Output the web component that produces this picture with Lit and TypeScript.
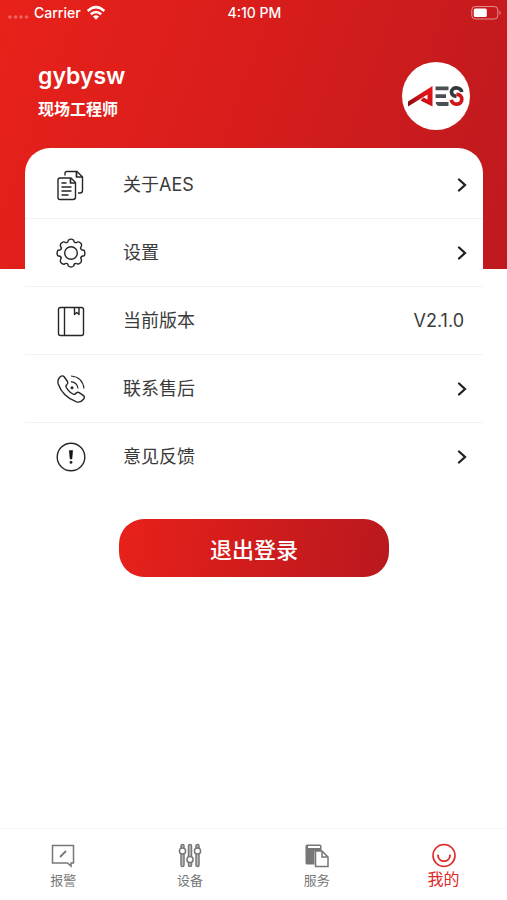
import { LitElement, html, css, svg, TemplateResult } from "lit";
import { customElement } from "lit/decorators.js";
import { classMap } from "lit/directives/class-map.js";

interface MenuRow {
  icon: TemplateResult;
  label: string;
  value?: string;
}

interface Tab {
  icon: TemplateResult;
  label: string;
  active?: boolean;
}

const documents = svg`
  <path d="M9 6.500V4.500Q9 2.500 11 2.500H21L26.500 8V21.500Q26.500 24 24 24H22"/>
  <path d="M20.500 2.500V8H26.500" stroke-width="1.700"/>
  <path d="M4 9H15L19.500 13.500V28Q19.500 30.500 17 30.500H4Q2 30.500 2 28.500V11Q2 9 4 9Z"/>
  <path d="M14.500 9V14H19.500" stroke-width="1.700"/>
  <path d="M5.500 14H10.500M5.500 18H15.500M5.500 22H15.500M5.500 26H12.500"/>`;

const gear = svg`
  <path d="M12.300 3.200Q15 1 17.700 3.200Q18 6 20.400 5.600Q22.600 3.700 25.300 6.700Q26.200 9.200 24.500 10.800Q25 13.400 28 13.200Q29.600 16 28.300 18.700Q25 18.800 24.700 21.200Q26.200 23.400 24.800 25.500Q22.600 28 20.300 26.500Q18 26 17.700 29Q15 31 12.300 29Q12 26 9.700 26.400Q7.400 28.300 4.800 25.500Q3.700 23.400 5.300 21.200Q5 18.800 1.700 18.700Q.300 16 2 13.200Q5 13.400 5.500 10.800Q3.700 9.200 4.700 6.700Q7.400 3.700 9.600 5.600Q12 6 12.300 3.200Z"/>
  <circle cx="15" cy="16" r="6.300"/>`;

const book = svg`
  <rect x="2.500" y="2.500" width="25" height="28" rx="2"/>
  <path d="M8.500 2.500V30.500M18.500 2.500V9.500L20.700 7.500L23 9.500V2.500"/>`;

const phone = svg`
  <path d="M2 8Q2 6 4 4Q6.500 1.800 8.300 4L11.500 8.500Q12.500 10.300 11 11.500Q9.300 12.700 10.300 14.500Q13.300 19.600 17.700 21.300Q19 21.800 20.200 20Q21.500 18.600 23.200 19.600L27.500 22.600Q29.300 24 27.500 26.200Q24.500 30 20.500 28.800Q6.800 24 2.200 11Q1.800 9.500 2 8Z"/>
  <path d="M15 8.700Q21.300 9.500 22 15.500M15 3Q26.500 4 28 15.500" stroke-width="1.200"/>
  <circle cx="16" cy="14.700" r=".8"/>`;

const notice = svg`
  <circle cx="15" cy="16" r="13.800"/>
  <path d="M13.300 9.500H16.700L15.900 18H14.100Z" fill="currentColor" stroke-width=".6"/>
  <circle cx="15" cy="21.300" r="1.100" fill="currentColor" stroke-width=".8"/>`;

const alarm = svg`
  <path d="M1.500 2.500H22.500V20H20V23L16.500 20H1.500Z"/>
  <path d="M9 14L15 8" stroke-width="1.800"/>`;

const sliders = svg`
  <path d="M4.500 3V22M12 3V22M19.500 3V22" stroke-width="4.500" stroke-linecap="round"/>
  <path d="M4.500 3V22M12 3V22M19.500 3V22" stroke="#bbb" stroke-width="1.600" stroke-linecap="round"/>
  <g fill="#fff"><circle cx="4.500" cy="8" r="3.100"/><circle cx="12" cy="16.500" r="3.100"/><circle cx="19.500" cy="8" r="3.100"/></g>`;

const service = svg`
  <path d="M2 1.500H15Q16.500 1.500 16.500 3V8H9.500V21.500H2Q.500 21.500 .500 20V3Q.500 1.500 2 1.500Z" fill="currentColor" stroke="none"/>
  <path d="M3 4H15" stroke="#fff" stroke-width="2"/>
  <path d="M10.500 8H17L23 14V23.500H10.500Z" fill="#fff"/>
  <path d="M17 8V14H23"/>`;

const smile = svg`
  <circle cx="12" cy="12.500" r="11" stroke-width="1.600"/>
  <path d="M6 12.500C6.500 20 17.500 20 18 12.500" stroke-width="1.900" stroke-linecap="round"/>`;

@customElement("status-bar")
class StatusBar extends LitElement {
  static styles = css`
    :host {
      display: grid;
      grid-template-columns: 1fr auto 1fr;
      align-items: center;
      height: 26px;
      padding: 0 6px 0 8px;
      font: 500 14px/20px Inter, "Liberation Sans", sans-serif;
    }
    .carrier {
      display: flex;
      align-items: center;
      gap: 5px;
    }
    .battery {
      justify-self: end;
    }
    svg {
      display: block;
    }
  `;

  render() {
    return html`
      <div class="carrier">
        <svg width="21" height="16" fill="#fff" fill-opacity=".3" aria-hidden="true">
          <circle cx="2" cy="12" r="1.800" /><circle cx="7.500" cy="12" r="1.800" />
          <circle cx="13" cy="12" r="1.800" /><circle cx="18.500" cy="12" r="1.800" />
        </svg>
        <span>Carrier</span>
        <svg width="20" height="16" viewBox="0 0 20 16" fill="none" stroke="#fff" stroke-width="2.500" aria-hidden="true">
          <path d="M1.700 6Q10-1.700 18.300 6M4.800 9.300Q10 4.600 15.200 9.300" />
          <path d="M7 11.600Q10 9 13 11.600L10 14.800Z" fill="#fff" stroke="none" />
        </svg>
      </div>
      <span>4:10 PM</span>
      <svg class="battery" width="30" height="16" viewBox="0 0 30 16" aria-hidden="true">
        <rect x=".8" y="1.500" width="26" height="12.500" rx="3.500" fill="none" stroke="#fff" stroke-opacity=".5" />
        <rect x="2.800" y="3.500" width="13" height="8.500" rx="1.500" fill="#fff" />
        <path d="M28.500 5.500Q31 7.700 28.500 10Z" fill="#fff" fill-opacity=".5" />
      </svg>
    `;
  }
}

@customElement("brand-avatar")
class BrandAvatar extends LitElement {
  static styles = css`
    :host {
      display: grid;
      place-items: center;
      width: 68px;
      height: 68px;
      border-radius: 50%;
      background: #fff;
    }
  `;

  render() {
    return html`
      <svg width="56" height="22" viewBox="0 0 56 22" role="img" aria-label="AES">
        <defs>
          <linearGradient id="wing" x1="0" y1="1" x2="1" y2="0">
            <stop offset="0" stop-color="#7e0d12" />
            <stop offset=".6" stop-color="#dc1218" />
            <stop offset="1" stop-color="#e7141a" />
          </linearGradient>
        </defs>
        <path d="M0 16.500L24.500 1V21.500L12.500 15.500L15.500 12.500L19.500 14.500V9.500L0 21.500Z" fill="url(#wing)" />
        <path d="M27.500 1.500H40.500V5.300H27.500ZM27.500 9.300H38V13H27.500ZM27.500 17H40.500V21H31Q28.500 21 27.500 17Z" fill="#4a4f53" />
        <g fill="none" stroke-width="3.700">
          <path d="M53.800 7C53 1.800 43.500 1.300 43.500 7C43.500 9.500 45.500 11 48.500 11.300" stroke="#34393d" />
          <path d="M48.500 9.300C52 9.300 53.800 11.500 53.800 14.300C53.800 20.500 44.500 20.800 43.300 14.800" stroke="#cf141b" />
        </g>
      </svg>
    `;
  }
}

@customElement("profile-menu")
class ProfileMenu extends LitElement {
  static styles = css`
    :host {
      display: block;
      padding-top: 3px;
      border-radius: 25px 25px 0 0;
      background: #fff;
    }
    .row {
      box-sizing: border-box;
      display: grid;
      grid-template-columns: 32px 1fr auto;
      align-items: center;
      column-gap: 35px;
      width: 100%;
      height: 68px;
      padding: 0 15px 0 31px;
      border: 0;
      border-bottom: 1px solid #f2f2f2;
      background: none;
      color: #3a3a3a;
      text-align: left;
      font: 400 18px/26px Inter, "Noto Sans CJK SC", sans-serif;
    }
    button.row {
      cursor: pointer;
    }
    .row:last-child {
      border-color: transparent;
    }
    .icon {
      fill: none;
      stroke: #262626;
      color: #111;
      stroke-width: 1.4;
      stroke-linejoin: round;
    }
    .value {
      padding-right: 4px;
    }
    svg {
      display: block;
    }
  `;

  private rows: MenuRow[] = [
    { icon: documents, label: "关于AES" },
    { icon: gear, label: "设置" },
    { icon: book, label: "当前版本", value: "V2.1.0" },
    { icon: phone, label: "联系售后" },
    { icon: notice, label: "意见反馈" },
  ];

  private content(row: MenuRow) {
    return html`
      <svg class="icon" width="30" height="32" viewBox="0 0 30 32" aria-hidden="true">${row.icon}</svg>
      <span>${row.label}</span>
      ${row.value
        ? html`<span class="value">${row.value}</span>`
        : html`<svg width="12" height="16" viewBox="0 0 12 16" fill="none" stroke="#222" stroke-width="2.300" stroke-linecap="round" aria-hidden="true">
            <path d="M3 2.500L9 8L3 13.500" />
          </svg>`}
    `;
  }

  render() {
    return this.rows.map((row) =>
      row.value
        ? html`<div class="row">${this.content(row)}</div>`
        : html`<button class="row" type="button">${this.content(row)}</button>`
    );
  }
}

@customElement("tab-bar")
class TabBar extends LitElement {
  static styles = css`
    nav {
      display: grid;
      grid-template-columns: repeat(4, 1fr);
      border-top: 1px solid #f7f7f7;
      background: #fff;
    }
    a {
      display: flex;
      flex-direction: column;
      align-items: center;
      height: 57px;
      padding-top: 14px;
      color: #777;
      text-decoration: none;
      font: 400 13px/24px "Noto Sans CJK SC", sans-serif;
    }
    .active {
      color: #dc2a2a;
      font-size: 16px;
      line-height: 20px;
    }
    svg {
      display: block;
      fill: none;
      stroke: currentColor;
      stroke-width: 1.5;
    }
  `;

  private tabs: Tab[] = [
    { icon: alarm, label: "报警" },
    { icon: sliders, label: "设备" },
    { icon: service, label: "服务" },
    { icon: smile, label: "我的", active: true },
  ];

  render() {
    return html`<nav>
      ${this.tabs.map(
        (tab) => html`<a href="#" class=${classMap({ active: !!tab.active })}>
          <svg width="24" height="25" viewBox="0 0 24 25" aria-hidden="true">${tab.icon}</svg>
          <span>${tab.label}</span>
        </a>`
      )}
    </nav>`;
  }
}

@customElement("app-root")
class AppRoot extends LitElement {
  static styles = css`
    :host {
      display: flex;
      flex-direction: column;
      min-height: 100vh;
      background: #fff;
      color: #fff;
    }
    header {
      padding-bottom: 121px;
      background: linear-gradient(110deg, #e8211a, #d71d1c 48%, #bd191f);
    }
    .profile {
      display: flex;
      justify-content: space-between;
      align-items: flex-start;
      padding: 36px 37px 18px 38px;
    }
    h1,
    p {
      margin: 0;
    }
    h1 {
      font: 600 23px/28px Inter, "Liberation Sans", sans-serif;
    }
    p {
      padding-top: 6px;
      font: 700 16px/24px "Noto Sans CJK SC", sans-serif;
    }
    main {
      flex: 1;
      display: flex;
      flex-direction: column;
      margin: -121px 24px 0 25px;
    }
    .logout {
      align-self: center;
      width: 59%;
      height: 58px;
      margin: 28px 0;
      border: 0;
      border-radius: 25px;
      background: linear-gradient(100deg, #e8211a, #d01c1c 50%, #b9181f);
      color: #fff;
      font: 500 22px/32px "Noto Sans CJK SC", sans-serif;
      cursor: pointer;
    }
  `;

  render() {
    return html`
      <header>
        <status-bar></status-bar>
        <div class="profile">
          <div>
            <h1>gybysw</h1>
            <p>现场工程师</p>
          </div>
          <brand-avatar></brand-avatar>
        </div>
      </header>
      <main>
        <profile-menu></profile-menu>
        <button class="logout" type="button">退出登录</button>
      </main>
      <tab-bar></tab-bar>
    `;
  }
}
